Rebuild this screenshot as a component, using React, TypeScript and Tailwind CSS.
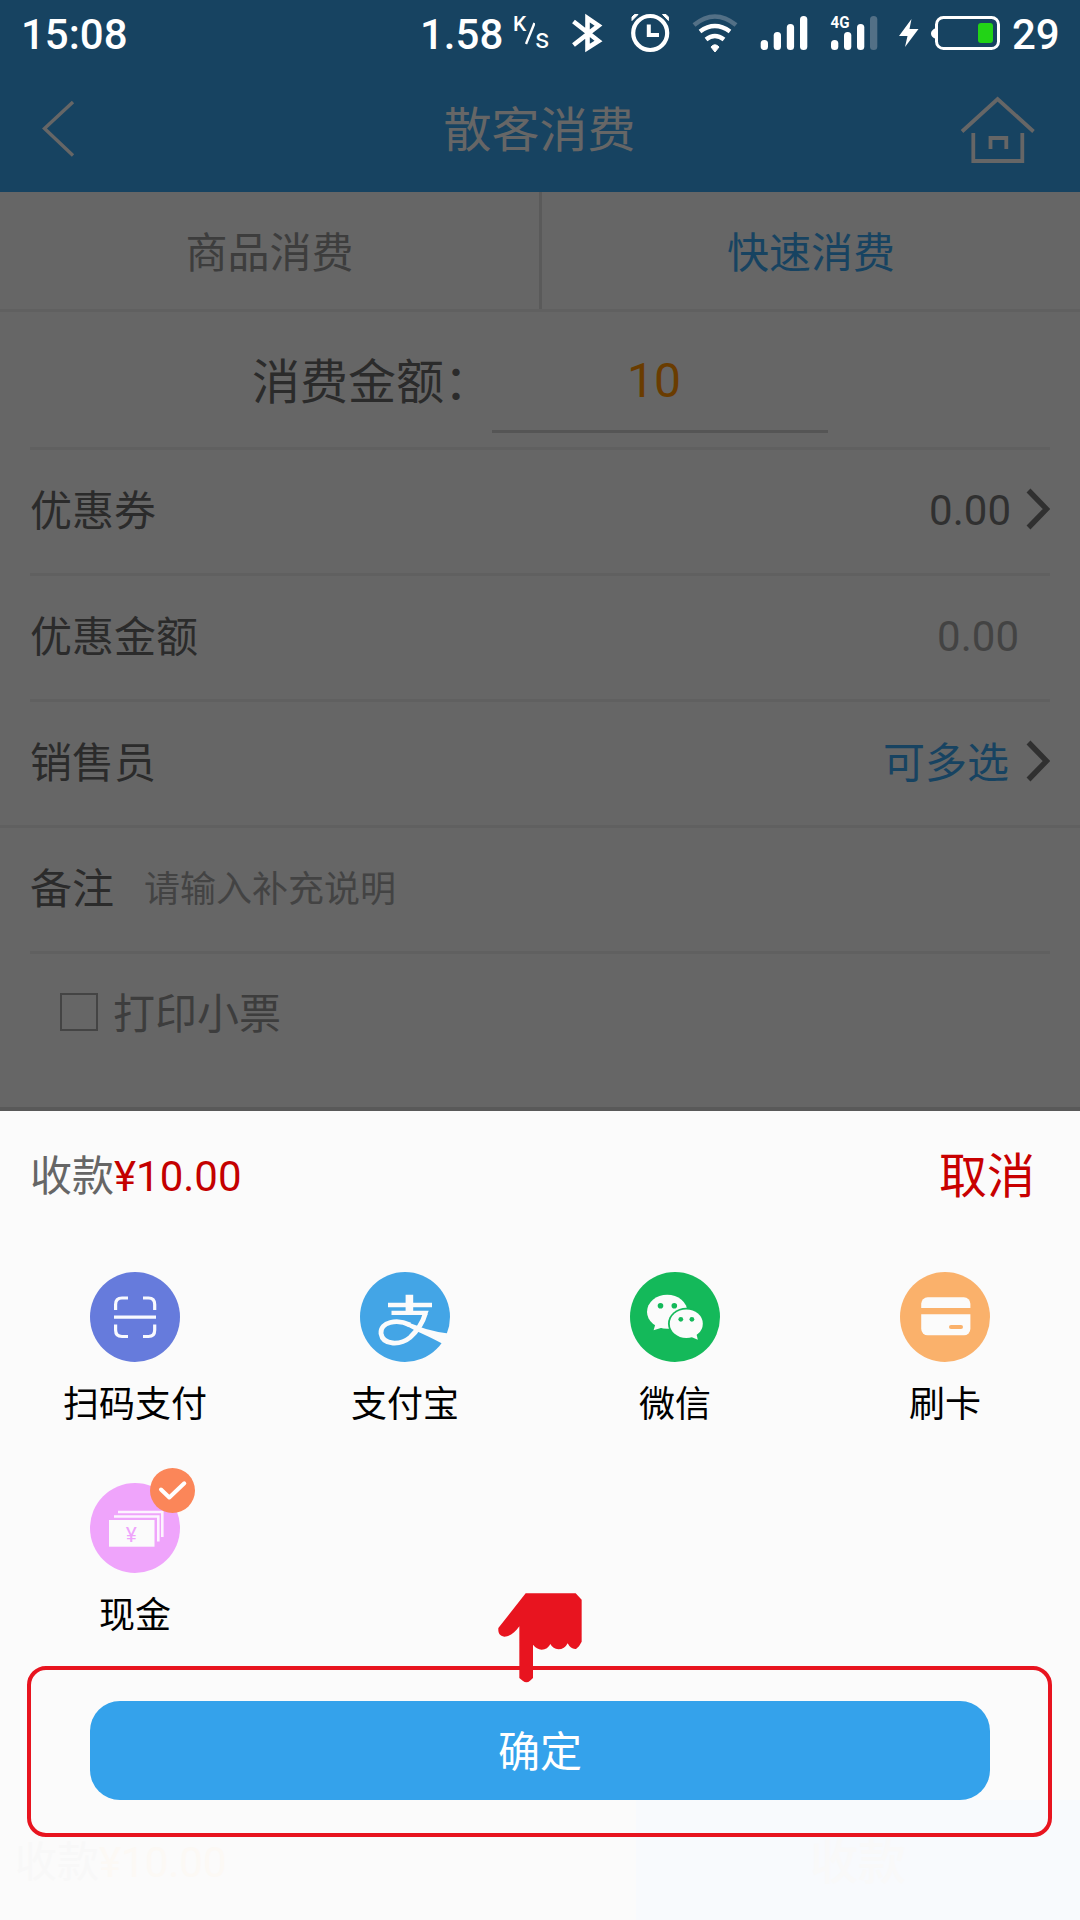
import React from "react";

function StatusBar() {
  return (
    <div className="flex h-[66px] items-start pl-[21px] text-[42px] leading-[69px] font-medium text-white">
      <span className="w-[399px]">15:08</span>
      <span className="w-[93px]">1.58</span>
      <span className="flex w-[57px] items-start">
        <span className="mt-[9px] w-[12px] text-[21px] leading-[30px]">K</span>
        <svg className="mt-[22px] h-[24px] w-[10px]" viewBox="0 0 10 24">
          <path d="M1 22 9.500 1" stroke="#fff" strokeWidth="2.4" />
        </svg>
        <span className="mt-[22px] text-[28px] leading-[34px] font-normal">s</span>
      </span>
      <svg className="h-[66px] w-[440px]" viewBox="570 0 440 66" fill="none" stroke="#fff">
        <path d="M573.5 21.5 598.5 41 587.5 48V18L598.5 25.500 573.5 45" strokeWidth="4.6" />
        <circle cx="650.2" cy="33" r="17" strokeWidth="4.2" />
        <path d="M648.8 24.500V35H659" strokeWidth="4" />
        <path d="M632 20.500V17L634.500 14.500H638Z M668.400 20.500V17L666 14.500H662.500Z" fill="#fff" strokeWidth="1" />
        <path d="M694 25Q714.800 8 736 25" stroke="#537086" strokeWidth="4.6" />
        <path d="M700 31.500Q714.800 20.500 730 31.500" strokeWidth="4.4" />
        <path d="M706 39.500Q714.800 32.500 724 39.500" strokeWidth="4.4" />
        <path d="M711 47Q714.800 42.500 719 47L715 52Z" fill="#fff" strokeWidth="1" />
        <g fill="#fff" stroke="none">
          <rect x="760.700" y="40" width="7.300" height="10" rx="3.500" />
          <rect x="773.700" y="32" width="7.300" height="18" rx="3.500" />
          <rect x="786.800" y="24" width="7.300" height="26" rx="3.500" />
          <rect x="800" y="16" width="7.300" height="34" rx="3.500" />
          <rect x="831" y="40" width="7.300" height="10" rx="3.500" />
          <rect x="844" y="32" width="7.300" height="18" rx="3.500" />
          <rect x="857" y="24" width="7.300" height="26" rx="3.500" />
          <rect x="870" y="16" width="7.300" height="34" rx="3.500" fill="#537086" />
          <text x="830.500" y="28" fontSize="16" fontWeight="700" textLength="19" lengthAdjust="spacingAndGlyphs">4G</text>
          <path d="M911.500 19 899 36H907.500L905 47 918.500 29H909.500Z" />
          <path d="M936 28Q931 30 931 33.500T936 39Z" />
          <rect x="978" y="23" width="15" height="20" rx="3" fill="#22d316" />
        </g>
        <rect x="936.500" y="17.500" width="62" height="31" rx="7" strokeWidth="3" />
      </svg>
      <span className="ml-[2px]">29</span>
    </div>
  );
}

function Header() {
  return (
    <header className="h-[192px] bg-[#174361]">
      <StatusBar />
      <div className="flex h-[126px] items-center justify-between pr-[44px] pl-[42px]">
        <svg className="h-[60px] w-[76px]" viewBox="42 98 76 60" fill="none">
          <path d="M73 101 44.500 127.500 73 154.500" stroke="#666" strokeWidth="3.400" />
        </svg>
        <h1 className="pt-[4px] pl-[1px] text-[48px] leading-[60px] font-normal text-[#666]">散客消费</h1>
        <svg className="h-[72px] w-[76px]" viewBox="960 92 76 72" fill="none" stroke="#666" strokeWidth="3.800">
          <path d="M962 130.500 997.600 98 1033.500 130.500" />
          <path d="M973.300 132V160H1022.300V132" />
          <path d="M990.500 148V137H1006.300V148" />
        </svg>
      </div>
    </header>
  );
}

function Chevron() {
  return (
    <svg className="mb-[5px] h-[42px] w-[24px]" viewBox="0 0 24 42" fill="none">
      <path d="M2.500 2.500 20.500 21 2.500 39.500" stroke="#303030" strokeWidth="5.400" />
    </svg>
  );
}

function Row({ label, children }: { label: string; children?: React.ReactNode }) {
  return (
    <div className="mx-[30px] flex h-[126px] items-center border-b-[3px] border-[#606060] text-[42px] leading-[50px]">
      <span className="text-[#2b2b2b]">{label}</span>
      {children}
    </div>
  );
}

function Form() {
  return (
    <main className="h-[919px] bg-[#666]">
      <div className="flex h-[120px] border-b-[3px] border-[#606060] text-[42px]">
        <div className="flex w-[542px] items-center justify-center border-r-[3px] border-[#5a5a5a] pt-[5px] text-[#3d3d3d]">商品消费</div>
        <div className="flex flex-1 items-center justify-center pt-[5px] text-[#174361]">快速消费</div>
      </div>
      <div className="mx-[30px] flex h-[138px] items-center border-b-[3px] border-[#606060] pl-[222px] text-[48px] leading-[60px]">
        <span className="w-[240px] pt-[6px] text-[#2b2b2b]">消费金额：</span>
        <div className="mt-[14px] flex h-[107px] w-[336px] items-center justify-center self-start border-b-[3px] border-[#555] pr-[12px] pt-[6px] text-[#6a3c00]">
          10
        </div>
      </div>
      <Row label="优惠券">
        <span className="mr-[15px] mb-[2px] ml-auto text-[#303030]">0.00</span>
        <Chevron />
      </Row>
      <Row label="优惠金额">
        <span className="mr-[31px] mb-[2px] ml-auto text-[#434343]">0.00</span>
      </Row>
      <div className="border-b-[3px] border-[#606060]">
        <div className="mx-[30px] flex h-[123px] items-center text-[42px] leading-[50px]">
          <span className="text-[#2b2b2b]">销售员</span>
          <span className="ml-auto mr-[17px] text-[#174361]">可多选</span>
          <Chevron />
        </div>
      </div>
      <Row label="备注">
        <span className="ml-[30px] text-[36px] text-[#434343]">请输入补充说明</span>
      </Row>
      <div className="flex h-[117px] items-center pl-[60px] text-[42px] leading-[50px] text-[#3d3d3d]">
        <span className="mr-[15px] mb-[2px] h-[38px] w-[38px] border-2 border-[#444]" />
        <span className="pt-[4px]">打印小票</span>
      </div>
      <div className="mt-[36px] h-[4px] bg-[#595959]" />
    </main>
  );
}

function ScanIcon() {
  return (
    <svg className="size-[90px]" viewBox="0 0 90 90" fill="none" stroke="#f8f9fe" strokeWidth="3.200">
      <circle cx="45" cy="45" r="45" fill="#667bdc" stroke="none" />
      <path d="M38 26H32Q25.600 26 25.600 32.500V38M53 26H58.500Q64.700 26 64.700 32.500V38M25.600 52.500V58Q25.600 64.500 32 64.500H38M53 64.500H58.500Q64.700 64.500 64.700 58V52.500M24 45.200H66" />
    </svg>
  );
}

function AlipayIcon() {
  return (
    <svg className="size-[90px]" viewBox="0 0 90 90">
      <circle cx="45" cy="45" r="45" fill="#43a5e6" />
      <path d="M45.600 22.700H53.200V30.700H72V35.300H53.200V38.700H68.700L67 43H31.500V38.700H45.600V35.300H28V30.700H45.600Z" fill="#fbfbfb" />
      <path d="M65.500 41C63 50 57 59 50 65.500C41 73 23 74 21 61.500C20 50 37 46.500 50 53" fill="none" stroke="#fbfbfb" strokeWidth="4.800" />
      <path d="M44 49Q58 54 66 57 78 60.500 90 61.800L84 72.500Q68 64 55 58.500L46 53.500Z" fill="#fbfbfb" />
    </svg>
  );
}

function WechatIcon() {
  return (
    <svg className="size-[90px]" viewBox="0 0 90 90">
      <circle cx="45" cy="45" r="45" fill="#14b95a" />
      <g fill="#fbfbfb">
        <ellipse cx="37.200" cy="39.700" rx="20.200" ry="17" />
        <path d="M26 50 23.600 58.300 34 55Z" />
        <ellipse cx="56.300" cy="51.700" rx="18.300" ry="16" fill="#14b95a" />
        <ellipse cx="56.300" cy="51.700" rx="16.500" ry="14.300" />
        <path d="M59 64 67.800 67.800 66 60Z" />
      </g>
      <g fill="#14b95a">
        <circle cx="30.500" cy="33.700" r="2.800" />
        <circle cx="44.300" cy="33.700" r="2.800" />
        <circle cx="50.800" cy="47.300" r="2.400" />
        <circle cx="61.900" cy="47.300" r="2.400" />
      </g>
    </svg>
  );
}

function CardIcon() {
  return (
    <svg className="size-[90px]" viewBox="0 0 90 90">
      <circle cx="45" cy="45" r="45" fill="#fab16b" />
      <rect x="21.200" y="25.300" width="49.200" height="38" rx="6.500" fill="#fbfbfb" />
      <path d="M21 36H71V42.300H21Z" fill="#fab16b" />
      <rect x="49" y="53" width="14" height="4" rx="2" fill="#fab16b" />
    </svg>
  );
}

function CashIcon() {
  return (
    <span className="relative">
      <svg className="size-[90px]" viewBox="0 0 90 90">
        <circle cx="45" cy="45" r="45" fill="#efa4fb" />
        <path d="M24 33.500H68.300V58.500M28 29H72.300V54" fill="none" stroke="#fdf3ff" strokeWidth="2.600" />
        <rect x="19" y="37" width="45.500" height="26.700" fill="#fbfbfb" />
        <text x="41.300" y="58.500" textAnchor="middle" fontSize="21" fill="#efa4fb">¥</text>
      </svg>
      <svg className="absolute -top-[15px] left-[60px] size-[45px]" viewBox="0 0 45 45" fill="none">
        <circle cx="22.500" cy="22.500" r="22.500" fill="#fb8659" />
        <path d="M11 21.500 19.300 29.500 34.300 15.300" stroke="#fff" strokeWidth="4" strokeLinecap="round" strokeLinejoin="round" />
      </svg>
    </span>
  );
}

const methods = [
  { name: "扫码支付", Icon: ScanIcon },
  { name: "支付宝", Icon: AlipayIcon },
  { name: "微信", Icon: WechatIcon },
  { name: "刷卡", Icon: CardIcon },
  { name: "现金", Icon: CashIcon },
];

function PaymentSheet() {
  return (
    <section className="h-[809px] bg-[#fbfbfb] bg-[linear-gradient(#f8fafd,#f8fafd)] bg-[length:444px_120px] bg-right-bottom bg-no-repeat">
      <div className="flex h-[129px] items-center justify-between pr-[45px] pl-[30px] text-[42px] leading-[50px] text-[#666]">
        <span className="pt-[2px]">
          收款<span className="text-[#c40000]">¥10.00</span>
        </span>
        <span className="pt-[3px] text-[48px] text-[#c80000]">取消</span>
      </div>
      <div className="grid h-[426px] auto-rows-[211px] grid-cols-4 pt-[32px]">
        {methods.map(({ name, Icon }) => (
          <div key={name} className="flex flex-col items-center text-[36px] leading-[44px] text-black">
            <Icon />
            <span className="mt-[21px]">{name}</span>
          </div>
        ))}
      </div>
      <div className="relative mr-[28px] ml-[27px] flex h-[171px] items-center rounded-[19px] border-4 border-[#e8141f] pr-[58px] pl-[59px]">
        <button className="mb-[2px] h-[99px] flex-1 rounded-[30px] bg-[#34a2eb] pt-[5px] text-[42px] leading-[50px] text-white">确定</button>
        <svg className="absolute -top-[79px] left-[465px] h-[94px] w-[90px]" viewBox="108 90 270 282">
          <path
            d="M197 97H347L365 116V242L357 256 348 264Q333 266 323 247 314 265 295 265 279 264 271 249 263 266 245 266 230 265 219 251V351L210 359Q200 368 188 359L178 351V196C166 214 150 227 133 227 118 225 114 216 115 201Z"
            fill="#e8141f"
          />
        </svg>
      </div>
      <div className="flex h-[83px] text-[42px] leading-[52px]">
        <span className="w-[636px] pl-[15px] text-[#f8f8f8]">
          收款<span className="text-[#fcf9f5]">¥10.00</span>
        </span>
        <span className="flex-1 text-center text-[48px] font-medium text-[#f9f9f9]">收款</span>
      </div>
    </section>
  );
}

export default function App() {
  return (
    <div lang="zh-CN" className={'h-[1920px] w-[1080px] overflow-hidden font-[Roboto,"Noto_Sans_CJK_SC",sans-serif]'}>
      <Header />
      <Form />
      <PaymentSheet />
    </div>
  );
}
